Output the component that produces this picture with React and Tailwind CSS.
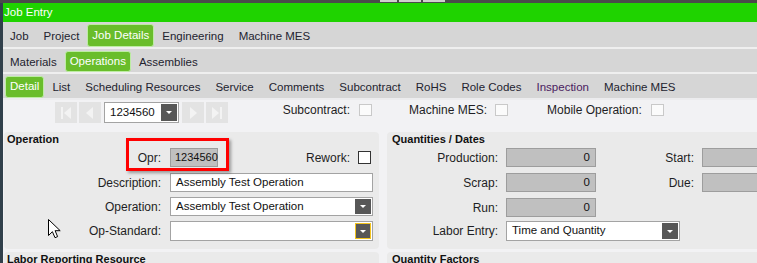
import React from 'react';

function Tab({ label, active, tone }) {
  if (active) {
    return (
      <div className="mt-[1.5px] flex items-center rounded-[3px] border border-[#bdeca4] bg-[#69bd2b] px-[4px] text-white">
        {label}
      </div>
    );
  }
  return <div className={`flex items-center px-[7px] pt-[4px] ${tone || 'text-[#23232f]'}`}>{label}</div>;
}

function DropBtn({ focus }) {
  return (
    <div
      className={
        focus
          ? 'm-[1px] flex w-[16px] items-center justify-center border border-[#f2c31c] bg-[#575757]'
          : 'm-[1px] flex w-[16px] items-center justify-center bg-[#575757]'
      }
    >
      <svg width="6" height="3" viewBox="0 0 6 3">
        <path d="M0 0h6L3 3z" fill="#fff" />
      </svg>
    </div>
  );
}

function Combo({ value, className, focus }) {
  return (
    <div className={`flex shrink-0 border border-[#a3a3a3] bg-white ${className}`}>
      <div className="flex flex-1 items-center pl-[5px] text-[11.5px] text-[#111]">{value}</div>
      <DropBtn focus={focus} />
    </div>
  );
}

function NavBtn({ kind }) {
  return (
    <div className="flex h-[21px] w-[22px] items-center justify-center bg-[#e3e3e3]">
      <svg width="12" height="14" viewBox="0 0 12 14">
        {kind === 'first' && (
          <g fill="#f3f3f3">
            <rect x="1" y="1" width="2" height="12" />
            <path d="M11 1L4 7l7 6z" />
          </g>
        )}
        {kind === 'prev' && <path d="M9 1L2 7l7 6z" fill="#f3f3f3" />}
        {kind === 'next' && <path d="M3 1l7 6-7 6z" fill="#f3f3f3" />}
        {kind === 'last' && (
          <g fill="#f3f3f3">
            <path d="M1 1l7 6-7 6z" />
            <rect x="9" y="1" width="2" height="12" />
          </g>
        )}
      </svg>
    </div>
  );
}

function GrayBox({ value, className }) {
  return (
    <div className={`flex h-[19px] shrink-0 items-center border border-[#9d9d9d] bg-[#c0c0c0] text-[11.5px] text-[#111] ${className}`}>
      {value}
    </div>
  );
}

function Check({ disabled }) {
  return (
    <div
      className={
        disabled
          ? 'h-[12px] w-[13px] border border-[#c9c9c9] bg-[#fbfbfb]'
          : 'h-[13px] w-[13px] border border-[#333] bg-white'
      }
    />
  );
}

export default function App() {
  return (
    <div className="relative h-[263px] w-[757px] overflow-hidden bg-[#f2f2f4] font-['Liberation_Sans',Arial,sans-serif] text-[12px] text-[#1e1e24]">
      <div className="relative h-[3px] bg-[#4a4a4a]">
        <div className="absolute left-[380px] top-0 h-[2px] w-[17px] bg-[#cfcfcf]" />
        <div className="absolute left-[399px] top-0 h-[2px] w-[22px] bg-[#cfcfcf]" />
        <div className="absolute left-[423px] top-0 h-[2px] w-[22px] bg-[#cfcfcf]" />
      </div>

      <div className="flex flex-col border-l-[3px] border-[#31404b]">
        <div className="flex h-[19px] shrink-0 items-center bg-[#1fd300] pl-[1px] text-[11.5px] text-white">Job Entry</div>

        <div className="flex h-[25px] shrink-0 gap-[1px] bg-[#d6d6d6] text-[11.5px]">
          <Tab label="Job" />
          <Tab label="Project" />
          <Tab label="Job Details" active />
          <Tab label="Engineering" />
          <Tab label="Machine MES" />
        </div>
        <div className="h-[2px] shrink-0 bg-[#efefef]" />
        <div className="flex h-[23px] shrink-0 gap-[1px] bg-[#d6d6d6] text-[11.5px]">
          <Tab label="Materials" />
          <Tab label="Operations" active />
          <Tab label="Assemblies" />
        </div>
        <div className="h-[2px] shrink-0 bg-[#efefef]" />
        <div className="flex h-[24px] shrink-0 gap-[1px] bg-[#d6d6d6] pl-[2px] text-[11.5px]">
          <Tab label="Detail" active />
          <Tab label="List" />
          <Tab label="Scheduling Resources" />
          <Tab label="Service" />
          <Tab label="Comments" />
          <Tab label="Subcontract" />
          <Tab label="RoHS" />
          <Tab label="Role Codes" />
          <Tab label="Inspection" tone="text-[#4a2060]" />
          <Tab label="Machine MES" />
        </div>
        <div className="h-[2px] shrink-0 bg-[#ececee]" />

        {/* record navigator */}
        <div className="flex h-[24px] shrink-0 items-start">
          <div className="ml-[52px] mt-[2px] flex gap-[2px]">
            <NavBtn kind="first" />
            <NavBtn kind="prev" />
          </div>
          <Combo value="1234560" className="ml-[3px] mt-[2px] h-[21px] w-[75px]" />
          <div className="ml-[3px] mt-[2px] flex gap-[2px]">
            <NavBtn kind="next" />
            <NavBtn kind="last" />
          </div>
          <div className="mt-[3px] flex items-center">
            <span className="w-[122px] text-right leading-[14px]">Subcontract:</span>
            <span className="ml-[9px]"><Check disabled /></span>
            <span className="ml-[37px] leading-[14px]">Machine MES:</span>
            <span className="ml-[8px]"><Check disabled /></span>
            <span className="ml-[39px] leading-[14px]">Mobile Operation:</span>
            <span className="ml-[9px]"><Check disabled /></span>
          </div>
        </div>

        {/* main panels */}
        <div className="ml-[1px] mt-[8px] flex shrink-0 gap-[8px]">
          <div className="relative h-[117px] w-[375px] shrink-0 rounded-[4px] bg-[#eaeaea]">
            <div className="pl-[3px] pt-[1px] text-[11px] font-bold leading-[13px] text-[#111]">Operation</div>
            <div className="mt-[2px] flex h-[19px] items-center pr-[8px]">
              <span className="w-[157px] shrink-0 text-right">Opr:</span>
              <GrayBox value="1234560" className="ml-[9px] w-[48px] justify-start pl-[4px] text-[11px]" />
              <span className="flex-1 text-right">Rework:</span>
              <span className="ml-[8px]"><Check /></span>
            </div>
            <div className="mt-[6px] flex h-[19px] items-center">
              <span className="w-[157px] shrink-0 text-right">Description:</span>
              <div className="ml-[9px] flex h-[19px] w-[203px] shrink-0 items-center border border-[#a3a3a3] bg-white pl-[5px] text-[11.5px] text-[#111]">
                Assembly Test Operation
              </div>
            </div>
            <div className="mt-[5px] flex h-[19px] items-center">
              <span className="w-[157px] shrink-0 text-right">Operation:</span>
              <Combo value="Assembly Test Operation" className="ml-[9px] h-[19px] w-[203px]" />
            </div>
            <div className="mt-[5px] flex h-[20px] items-center">
              <span className="w-[157px] shrink-0 text-right">Op-Standard:</span>
              <Combo value="" focus className="ml-[9px] h-[20px] w-[203px]" />
            </div>

            <div className="absolute left-[122px] top-[6px] h-[33px] w-[103px] border-[3px] border-[#ff0000] shadow-[2px_2px_3px_rgba(0,0,0,0.35)]" />
          </div>

          <div className="h-[117px] w-[380px] shrink-0 rounded-[4px] bg-[#eaeaea]">
            <div className="pl-[5px] pt-[1px] text-[11px] font-bold leading-[13px] text-[#111]">Quantities / Dates</div>
            <div className="mt-[2px] flex h-[19px] items-center">
              <span className="w-[111px] shrink-0 text-right">Production:</span>
              <GrayBox value="0" className="ml-[8px] w-[90px] justify-end pr-[5px]" />
              <span className="w-[98px] shrink-0 text-right">Start:</span>
              <GrayBox value="" className="ml-[8px] w-[60px]" />
            </div>
            <div className="mt-[6px] flex h-[19px] items-center">
              <span className="w-[111px] shrink-0 text-right">Scrap:</span>
              <GrayBox value="0" className="ml-[8px] w-[90px] justify-end pr-[5px]" />
              <span className="w-[98px] shrink-0 text-right">Due:</span>
              <GrayBox value="" className="ml-[8px] w-[60px]" />
            </div>
            <div className="mt-[6px] flex h-[19px] items-center">
              <span className="w-[111px] shrink-0 text-right">Run:</span>
              <GrayBox value="0" className="ml-[8px] w-[90px] justify-end pr-[5px]" />
            </div>
            <div className="mt-[4px] flex h-[20px] items-center">
              <span className="w-[111px] shrink-0 text-right">Labor Entry:</span>
              <Combo value="Time and Quantity" className="ml-[8px] h-[20px] w-[174px]" />
            </div>
          </div>
        </div>

        <div className="ml-[1px] mt-[3px] flex shrink-0 gap-[8px]">
          <div className="h-[20px] w-[375px] shrink-0 rounded-t-[4px] bg-[#eaeaea] pl-[3px] pt-[1px] text-[11px] font-bold leading-[13px] text-[#111]">
            Labor Reporting Resource
          </div>
          <div className="h-[20px] w-[380px] shrink-0 rounded-t-[4px] bg-[#eaeaea] pl-[5px] pt-[1px] text-[11px] font-bold leading-[13px] text-[#111]">
            Quantity Factors
          </div>
        </div>
      </div>

      <svg className="absolute left-[48px] top-[219px]" width="13" height="20" viewBox="0 0 13 20">
        <path d="M0.5 0.5V16.5L4.4 12.7L7 18.7L9.6 17.6L7.1 11.7H12.2Z" fill="#fff" stroke="#000" strokeWidth="1" strokeLinejoin="round" />
      </svg>
    </div>
  );
}
